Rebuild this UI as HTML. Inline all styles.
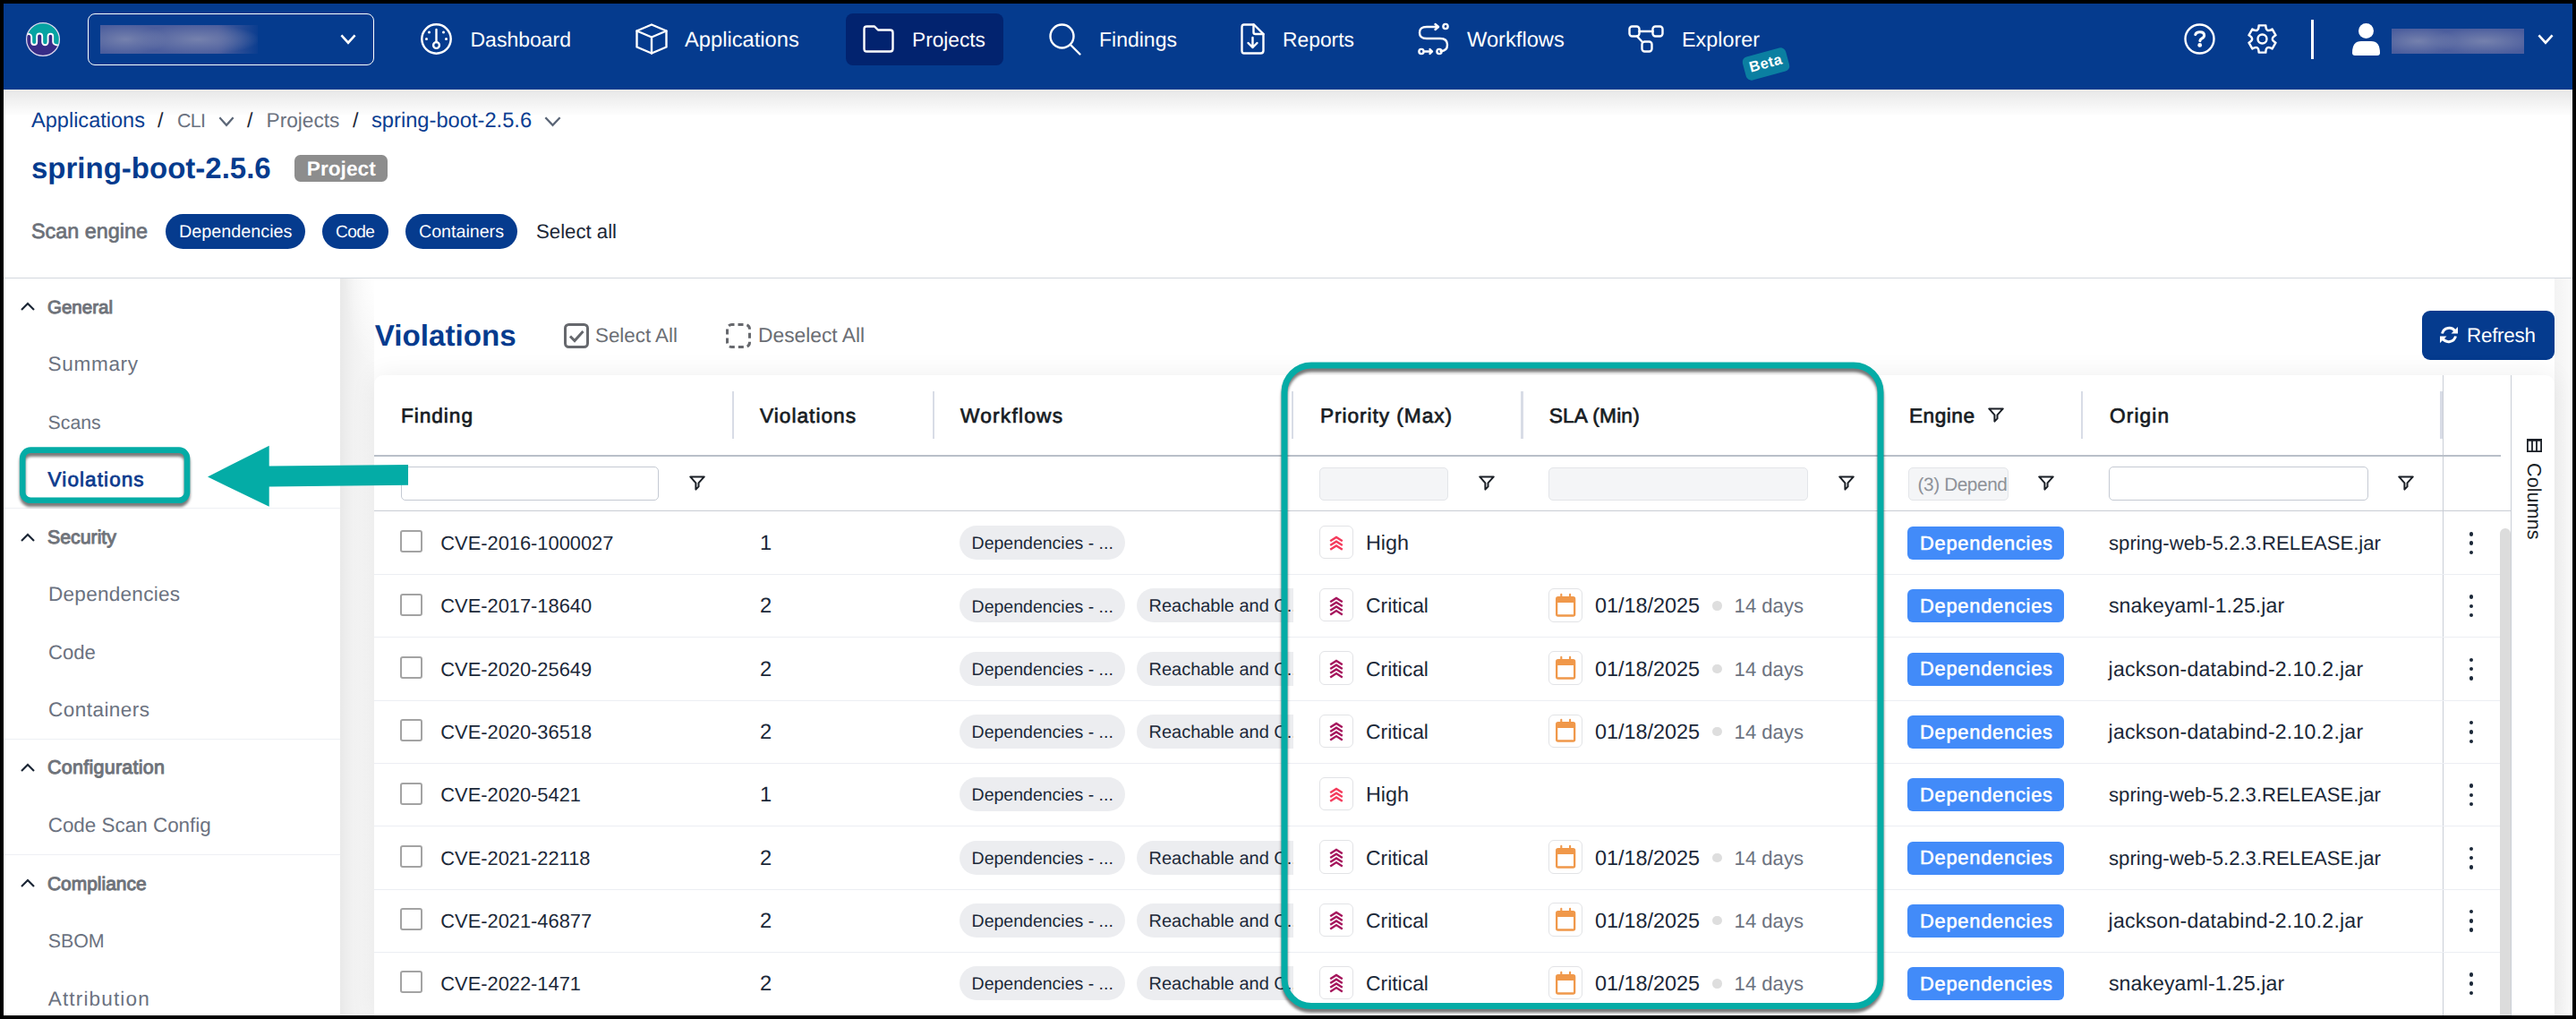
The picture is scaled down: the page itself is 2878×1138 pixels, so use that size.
<!DOCTYPE html>
<html><head><meta charset="utf-8"><style>
html,body{margin:0;padding:0;}
body{width:2878px;height:1138px;background:#000;position:relative;overflow:hidden;font-family:"Liberation Sans",sans-serif;}
#frame{position:absolute;left:0;top:0;width:2878px;height:1138px;clip-path:inset(4px 4px 4px 4px);background:#fff;}
.t{position:absolute;white-space:nowrap;text-rendering:geometricPrecision;}
svg{display:block;}
</style></head><body><div id="frame">
<div style="position:absolute;left:0px;top:0px;width:2878px;height:100px;background:#053b8e;"></div>
<div style="position:absolute;left:0px;top:100px;width:2878px;height:30px;background:linear-gradient(to bottom,rgba(0,0,0,0.095),rgba(0,0,0,0.02) 80%,rgba(0,0,0,0));"></div>
<svg style="position:absolute;left:28.5px;top:25px;overflow:visible;" width="38" height="38" viewBox="0 0 38 38"><defs><clipPath id="lc"><circle cx="19" cy="19" r="18.6"/></clipPath></defs>
<g clip-path="url(#lc)"><rect x="-2" y="-2" width="42" height="42" fill="#372c87"/>
<path d="M-1 14.5 Q5.5 11 6.2 16 V22 A3 3 0 0 0 12.2 22 V15.5 A3 3 0 0 1 18.2 15.5 V22 A3.2 3.2 0 0 0 24.6 22 V15.5 A2.8 2.8 0 0 1 30.2 15.5 V22 Q30.5 26 39 25.5 V-2 H-1Z" fill="#05a3a2"/>
<path d="M-1 14.5 Q5.5 11 6.2 16 V22 A3 3 0 0 0 12.2 22 V15.5 A3 3 0 0 1 18.2 15.5 V22 A3.2 3.2 0 0 0 24.6 22 V15.5 A2.8 2.8 0 0 1 30.2 15.5 V22 Q30.5 26 39 25.5" fill="none" stroke="#fff" stroke-width="1.9"/></g>
<circle cx="19" cy="19" r="18.4" fill="none" stroke="#dcd8ee" stroke-width="1.3"/></svg>
<div style="position:absolute;left:98px;top:15px;width:320px;height:58px;box-sizing:border-box;border:1.7px solid #fff;border-radius:8px;"></div>
<div style="position:absolute;left:112px;top:28px;width:176px;height:32px;background:radial-gradient(ellipse 48px 17px at 16% 50%,#7581ad,rgba(117,129,173,0)),radial-gradient(ellipse 70px 17px at 62% 50%,#7581ad,rgba(117,129,173,0)),linear-gradient(90deg,#4b5d9d 0%,#4b5d9d 75%,#0b3d8f 100%);"></div>
<svg style="position:absolute;left:381px;top:39px;overflow:visible;" width="16" height="10" viewBox="0 0 16 10"><path d="M1.3 1.3 L8.0 8.7 L14.7 1.3" fill="none" stroke="#ffffff" stroke-width="2.6" stroke-linecap="square" stroke-linejoin="miter"/></svg>
<svg style="position:absolute;left:470px;top:26px;overflow:visible;" width="35" height="35" viewBox="0 0 35 35"><g fill="none" stroke="#fff" stroke-width="2.4" stroke-linecap="round" stroke-linejoin="round"><circle cx="17.5" cy="17.5" r="16.2"/><line x1="17.5" y1="7" x2="17.5" y2="21"/><circle cx="17.5" cy="24.5" r="3.4"/></g>
<g fill="#fff"><circle cx="9.5" cy="10" r="1.5"/><circle cx="25.5" cy="10" r="1.5"/><circle cx="6.5" cy="17.5" r="1.5"/><circle cx="28.5" cy="17.5" r="1.5"/></g></svg>
<div class="t" style="left:525.50px;top:33.00px;font-size:23.00px;line-height:23.00px;color:#ffffff;">Dashboard</div>
<svg style="position:absolute;left:710px;top:26px;overflow:visible;" width="36" height="35" viewBox="0 0 36 35"><g fill="none" stroke="#fff" stroke-width="2.4" stroke-linecap="round" stroke-linejoin="round" stroke-width="2.2"><path d="M18 1.5 L34.5 8.5 V26.5 L18 33.5 L1.5 26.5 V8.5Z"/><path d="M1.5 8.5 L18 15.5 L34.5 8.5 M18 15.5 V33.5"/></g></svg>
<div class="t" style="left:765.00px;top:34.00px;font-size:23.70px;line-height:23.70px;color:#ffffff;">Applications</div>
<div style="position:absolute;left:945px;top:15px;width:176px;height:58px;background:#02236f;border-radius:8px;"></div>
<svg style="position:absolute;left:964px;top:28px;overflow:visible;" width="35" height="31" viewBox="0 0 35 31"><path fill="none" stroke="#fff" stroke-width="2.4" stroke-linecap="round" stroke-linejoin="round" stroke-width="2.3" d="M4.5 1.5 H13 L17 5.5 H30.5 Q33.5 5.5 33.5 8.5 V26.5 Q33.5 29.5 30.5 29.5 H4.5 Q1.5 29.5 1.5 26.5 V4.5 Q1.5 1.5 4.5 1.5Z"/></svg>
<div class="t" style="left:1019.00px;top:33.00px;font-size:22.70px;line-height:22.70px;color:#ffffff;">Projects</div>
<svg style="position:absolute;left:1172px;top:26px;overflow:visible;" width="36" height="36" viewBox="0 0 36 36"><g fill="none" stroke="#fff" stroke-width="2.4" stroke-linecap="round" stroke-linejoin="round" stroke-width="2.3"><circle cx="14.5" cy="14.5" r="13"/><line x1="24" y1="24" x2="34.5" y2="34.5"/></g></svg>
<div class="t" style="left:1228.00px;top:33.00px;font-size:23.00px;line-height:23.00px;color:#ffffff;">Findings</div>
<svg style="position:absolute;left:1386px;top:26px;overflow:visible;" width="27" height="35" viewBox="0 0 27 35"><g fill="none" stroke="#fff" stroke-width="2.4" stroke-linecap="round" stroke-linejoin="round" stroke-width="2.3"><path d="M4 1.5 H15 L25.5 12 V30.5 Q25.5 33.5 22.5 33.5 H4 Q1.5 33.5 1.5 30.5 V4.5 Q1.5 1.5 4 1.5Z"/><path d="M14.5 1.5 V10 Q14.5 12 16.5 12 H25.5"/><path d="M13.5 16 V27 M8.5 22 L13.5 27 L18.5 22"/></g></svg>
<div class="t" style="left:1433.00px;top:33.00px;font-size:22.85px;line-height:22.85px;color:#ffffff;">Reports</div>
<svg style="position:absolute;left:1584px;top:26px;overflow:visible;" width="36" height="36" viewBox="0 0 36 36"><g fill="none" stroke="#fff" stroke-width="2.4" stroke-linecap="round" stroke-linejoin="round" stroke-width="2.2"><path d="M23 4 H10 Q2 4 2 10.5 Q2 17 10 17 H25 Q33 17 33 24 Q33 31 25.5 31"/><path d="M19.5 1 L23 4 L19.5 7"/><circle cx="31" cy="3.5" r="2.6"/><circle cx="4" cy="31.5" r="2.6"/><circle cx="24" cy="31.5" r="2.6"/><path d="M8 31.5 H16 M13.5 29 L16 31.5 L13.5 34"/></g></svg>
<div class="t" style="left:1639.00px;top:34.00px;font-size:23.70px;line-height:23.70px;color:#ffffff;">Workflows</div>
<svg style="position:absolute;left:1819px;top:28px;overflow:visible;" width="40" height="31" viewBox="0 0 40 31"><g fill="none" stroke="#fff" stroke-width="2.4" stroke-linecap="round" stroke-linejoin="round" stroke-width="2.2"><rect x="1.5" y="1.5" width="11" height="11" rx="3"/><rect x="27.5" y="1.5" width="11" height="11" rx="3"/><rect x="15.5" y="18.5" width="11" height="11" rx="3"/><path d="M12.5 7 H27.5 M10 12.5 L16 19"/></g></svg>
<div class="t" style="left:1879.00px;top:33.00px;font-size:23.35px;line-height:23.35px;color:#ffffff;">Explorer</div>
<div style="position:absolute;left:1948px;top:58px;width:50px;height:27px;background:#0b7fa1;border-radius:6px;transform:rotate(-15deg);"></div>
<div class="t" style="left:1948px;top:58px;width:50px;height:27px;line-height:27px;text-align:center;font-size:16.5px;font-weight:700;color:#fff;transform:rotate(-15deg);letter-spacing:0.5px;">Beta</div>
<svg style="position:absolute;left:2440px;top:26px;overflow:visible;" width="35" height="35" viewBox="0 0 35 35"><g fill="none" stroke="#fff" stroke-width="2.4" stroke-linecap="round" stroke-linejoin="round" stroke-width="2.6"><circle cx="17.5" cy="17.5" r="16"/></g><path d="M12.8 12.6 Q13.6 9.8 17.8 9.8 Q22.6 9.8 22.6 13.4 Q22.6 15.6 19.8 17.2 Q18.2 18.1 17.9 19.6" fill="none" stroke="#fff" stroke-width="3.1" stroke-linecap="round"/><circle cx="17.7" cy="24.4" r="2.4" fill="#fff"/></svg>
<svg style="position:absolute;left:2511px;top:26px;overflow:visible;top:27px;" width="33" height="35" viewBox="0 0 33 35"><g fill="none" stroke="#fff" stroke-width="2.4" stroke-linecap="round" stroke-linejoin="round" stroke-width="2.3"><path d="M12.64 1.38 L20.36 1.38 Q20.30 9.92 27.66 5.60 L31.52 12.28 Q24.10 16.50 31.52 20.72 L27.66 27.40 Q20.30 23.08 20.36 31.62 L12.64 31.62 Q12.70 23.08 5.34 27.40 L1.48 20.72 Q8.90 16.50 1.48 12.28 L5.34 5.60 Q12.70 9.92 12.64 1.38 Z"/><circle cx="16.5" cy="16.5" r="5"/></g></svg>
<div style="position:absolute;left:2582px;top:22px;width:2.5px;height:44px;background:#fff;"></div>
<svg style="position:absolute;left:2628px;top:26px;overflow:visible;" width="32" height="36" viewBox="0 0 32 36"><g fill="#fff"><circle cx="15.5" cy="8.5" r="8.5"/><path d="M0 33 Q0 20 10 20 H21 Q31 20 31 33 Q31 36 28 36 H3 Q0 36 0 33Z"/></g></svg>
<div style="position:absolute;left:2672px;top:32px;width:148px;height:28px;background:radial-gradient(ellipse 45px 15px at 20% 50%,#7581ad,rgba(117,129,173,0)),radial-gradient(ellipse 60px 15px at 70% 50%,#7581ad,rgba(117,129,173,0)),#4b5d9d;"></div>
<svg style="position:absolute;left:2836px;top:39px;overflow:visible;" width="16" height="10" viewBox="0 0 16 10"><path d="M1.3 1.3 L8.0 8.7 L14.7 1.3" fill="none" stroke="#ffffff" stroke-width="2.6" stroke-linecap="square" stroke-linejoin="miter"/></svg>
<div class="t" style="left:35.00px;top:123.00px;font-size:23.55px;line-height:23.55px;color:#0a3d91;">Applications</div>
<div class="t" style="left:176.00px;top:123.00px;font-size:23.25px;line-height:23.25px;color:#1c2736;">/</div>
<div class="t" style="left:198.00px;top:125.00px;font-size:21.40px;line-height:21.40px;color:#6b7280;letter-spacing:-0.646px;">CLI</div>
<svg style="position:absolute;left:245px;top:131px;overflow:visible;" width="16" height="10" viewBox="0 0 16 10"><path d="M1.15 1.15 L8.0 8.85 L14.85 1.15" fill="none" stroke="#5b6677" stroke-width="2.3" stroke-linecap="square" stroke-linejoin="miter"/></svg>
<div class="t" style="left:276.00px;top:123.00px;font-size:23.25px;line-height:23.25px;color:#1c2736;">/</div>
<div class="t" style="left:297.50px;top:123.00px;font-size:22.70px;line-height:22.70px;color:#6b7280;">Projects</div>
<div class="t" style="left:394.00px;top:123.00px;font-size:23.25px;line-height:23.25px;color:#1c2736;">/</div>
<div class="t" style="left:415.00px;top:124.00px;font-size:23.70px;line-height:23.70px;color:#0a3d91;">spring-boot-2.5.6</div>
<svg style="position:absolute;left:609px;top:131px;overflow:visible;" width="17" height="10" viewBox="0 0 17 10"><path d="M1.15 1.15 L8.5 8.85 L15.85 1.15" fill="none" stroke="#5b6677" stroke-width="2.3" stroke-linecap="square" stroke-linejoin="miter"/></svg>
<div class="t" style="left:35.00px;top:171.00px;font-size:33.00px;line-height:33.00px;color:#053b8e;font-weight:700;">spring-boot-2.5.6</div>
<div style="position:absolute;left:329px;top:173px;width:104px;height:30px;background:#8d8d8d;border-radius:6.5px;"></div>
<div class="t" style="left:342.80px;top:177.00px;font-size:22.70px;line-height:22.70px;color:#fff;font-weight:700;">Project</div>
<div class="t" style="left:35.00px;top:247.00px;font-size:23.40px;line-height:23.40px;color:#6b7078;-webkit-text-stroke:0.7px #6b7078;">Scan engine</div>
<div style="position:absolute;left:185px;top:239px;width:156px;height:39px;background:#053b8e;border-radius:20px;"></div>
<div class="t" style="left:200.00px;top:250.00px;font-size:19.80px;line-height:19.80px;color:#fff;">Dependencies</div>
<div style="position:absolute;left:360px;top:239px;width:74px;height:39px;background:#053b8e;border-radius:20px;"></div>
<div class="t" style="left:375.00px;top:250.00px;font-size:19.10px;line-height:19.10px;color:#fff;letter-spacing:-0.574px;">Code</div>
<div style="position:absolute;left:453px;top:239px;width:125px;height:39px;background:#053b8e;border-radius:20px;"></div>
<div class="t" style="left:468.00px;top:250.00px;font-size:19.65px;line-height:19.65px;color:#fff;">Containers</div>
<div class="t" style="left:599.00px;top:248.00px;font-size:22.20px;line-height:22.20px;color:#1c2736;">Select all</div>
<div style="position:absolute;left:4px;top:309.5px;width:2870px;height:1.5px;background:#d3d8de;"></div>
<svg style="position:absolute;left:23px;top:338px;overflow:visible;" width="16" height="9" viewBox="0 0 16 9"><path d="M1 8 L8 1 L15 8" fill="none" stroke="#1c2736" stroke-width="2.2"/></svg>
<div class="t" style="left:53.00px;top:334.00px;font-size:20.50px;line-height:20.50px;color:#6f737a;-webkit-text-stroke:1.0px #6f737a;">General</div>
<div class="t" style="left:53.60px;top:396.00px;font-size:22.55px;line-height:22.55px;color:#6b7280;letter-spacing:0.666px;">Summary</div>
<div class="t" style="left:53.60px;top:462.00px;font-size:21.25px;line-height:21.25px;color:#6b7280;">Scans</div>
<div class="t" style="left:53.60px;top:525.00px;font-size:22.55px;line-height:22.55px;color:#0b3a8d;-webkit-text-stroke:0.75px #0b3a8d;letter-spacing:1.077px;">Violations</div>
<div style="position:absolute;left:4px;top:567px;width:376px;height:1px;background:#eef0f4;"></div>
<svg style="position:absolute;left:23px;top:595.5px;overflow:visible;" width="16" height="9" viewBox="0 0 16 9"><path d="M1 8 L8 1 L15 8" fill="none" stroke="#1c2736" stroke-width="2.2"/></svg>
<div class="t" style="left:53.00px;top:590.00px;font-size:21.30px;line-height:21.30px;color:#6f737a;-webkit-text-stroke:1.0px #6f737a;">Security</div>
<div class="t" style="left:54.00px;top:653.00px;font-size:22.55px;line-height:22.55px;color:#6b7280;letter-spacing:0.265px;">Dependencies</div>
<div class="t" style="left:54.00px;top:718.00px;font-size:22.15px;line-height:22.15px;color:#6b7280;">Code</div>
<div class="t" style="left:54.00px;top:782.00px;font-size:22.55px;line-height:22.55px;color:#6b7280;letter-spacing:0.447px;">Containers</div>
<div style="position:absolute;left:4px;top:824.5px;width:376px;height:1px;background:#eef0f4;"></div>
<svg style="position:absolute;left:23px;top:852.5px;overflow:visible;" width="16" height="9" viewBox="0 0 16 9"><path d="M1 8 L8 1 L15 8" fill="none" stroke="#1c2736" stroke-width="2.2"/></svg>
<div class="t" style="left:53.00px;top:847.00px;font-size:21.50px;line-height:21.50px;color:#6f737a;-webkit-text-stroke:1.0px #6f737a;letter-spacing:0.261px;">Configuration</div>
<div class="t" style="left:53.70px;top:911.00px;font-size:22.45px;line-height:22.45px;color:#6b7280;">Code Scan Config</div>
<div style="position:absolute;left:4px;top:954px;width:376px;height:1px;background:#eef0f4;"></div>
<svg style="position:absolute;left:23px;top:982px;overflow:visible;" width="16" height="9" viewBox="0 0 16 9"><path d="M1 8 L8 1 L15 8" fill="none" stroke="#1c2736" stroke-width="2.2"/></svg>
<div class="t" style="left:53.00px;top:978.00px;font-size:20.95px;line-height:20.95px;color:#6f737a;-webkit-text-stroke:1.0px #6f737a;">Compliance</div>
<div class="t" style="left:53.70px;top:1041.00px;font-size:21.40px;line-height:21.40px;color:#6b7280;">SBOM</div>
<div class="t" style="left:53.70px;top:1105.00px;font-size:22.55px;line-height:22.55px;color:#6b7280;letter-spacing:1.155px;">Attribution</div>
<div style="position:absolute;left:380px;top:311px;width:38px;height:823px;background:linear-gradient(90deg,#e9e9e9,#f2f2f2 40%,#f7f7f7 100%);"></div>
<div style="position:absolute;left:380px;top:311px;width:40px;height:110px;background:radial-gradient(ellipse 34px 100px at 100% 0%,rgba(255,255,255,1),rgba(255,255,255,0));"></div>
<div class="t" style="left:418.80px;top:359.00px;font-size:33.20px;line-height:33.20px;color:#053b8e;font-weight:700;">Violations</div>
<svg style="position:absolute;left:630px;top:361px;overflow:visible;" width="28" height="28" viewBox="0 0 28 28"><rect x="1.5" y="1.5" width="25" height="25" rx="4" fill="none" stroke="#66686d" stroke-width="3"/><path d="M7 14.5 L12 19.5 L21.5 9" fill="none" stroke="#66686d" stroke-width="3"/></svg>
<div class="t" style="left:665.00px;top:364.00px;font-size:22.35px;line-height:22.35px;color:#6b6e74;">Select All</div>
<svg style="position:absolute;left:811px;top:361px;overflow:visible;" width="28" height="28" viewBox="0 0 28 28"><rect x="1.5" y="1.5" width="25" height="25" rx="5" fill="none" stroke="#66686d" stroke-width="3" stroke-dasharray="6 4" stroke-dashoffset="3"/></svg>
<div class="t" style="left:847.00px;top:363.00px;font-size:22.80px;line-height:22.80px;color:#6b6e74;">Deselect All</div>
<div style="position:absolute;left:2706px;top:347px;width:148px;height:55px;background:#053b8e;border-radius:9px;"></div>
<svg style="position:absolute;left:2725px;top:364px;overflow:visible;" width="22" height="20" viewBox="0 0 22 20"><g fill="none" stroke="#fff" stroke-width="3"><path d="M3.5 8.5 A8 8 0 0 1 18 6"/><path d="M18.5 11.5 A8 8 0 0 1 4 14"/></g><path d="M21 1 V8.5 H13.5Z M1 19 V11.5 H8.5Z" fill="#fff"/></svg>
<div class="t" style="left:2756.00px;top:364.00px;font-size:22.45px;line-height:22.45px;color:#fff;letter-spacing:-0.275px;">Refresh</div>
<div style="position:absolute;left:2854px;top:311px;width:20px;height:823px;background:linear-gradient(90deg,#f3f3f3,#f7f7f7 60%,#fbfbfb);"></div>
<div style="position:absolute;left:418px;top:419px;width:2436px;height:720px;background:#fff;border-radius:10px 10px 0 0;box-shadow:0 0 28px rgba(0,0,0,0.07);"></div>
<div class="t" style="left:448.00px;top:453.00px;font-size:22.70px;line-height:22.70px;color:#171c23;-webkit-text-stroke:0.7px #171c23;letter-spacing:0.933px;">Finding</div>
<div class="t" style="left:849.00px;top:453.00px;font-size:22.70px;line-height:22.70px;color:#171c23;-webkit-text-stroke:0.7px #171c23;letter-spacing:1.006px;">Violations</div>
<div class="t" style="left:1073.00px;top:453.00px;font-size:22.70px;line-height:22.70px;color:#171c23;-webkit-text-stroke:0.7px #171c23;letter-spacing:1.227px;">Workflows</div>
<div class="t" style="left:1475.00px;top:453.00px;font-size:22.70px;line-height:22.70px;color:#171c23;-webkit-text-stroke:0.7px #171c23;letter-spacing:0.936px;">Priority (Max)</div>
<div class="t" style="left:1730.70px;top:453.00px;font-size:22.70px;line-height:22.70px;color:#171c23;-webkit-text-stroke:0.7px #171c23;letter-spacing:0.178px;">SLA (Min)</div>
<div class="t" style="left:2133.00px;top:453.00px;font-size:22.70px;line-height:22.70px;color:#171c23;-webkit-text-stroke:0.7px #171c23;letter-spacing:0.473px;">Engine</div>
<div class="t" style="left:2357.00px;top:453.00px;font-size:22.70px;line-height:22.70px;color:#171c23;-webkit-text-stroke:0.7px #171c23;letter-spacing:1.096px;">Origin</div>
<div style="position:absolute;left:817.5px;top:437px;width:2.5px;height:53px;background:#d8dce6;"></div>
<div style="position:absolute;left:1041.5px;top:437px;width:2.5px;height:53px;background:#d8dce6;"></div>
<div style="position:absolute;left:1442.5px;top:437px;width:2.5px;height:53px;background:#d8dce6;"></div>
<div style="position:absolute;left:1699px;top:437px;width:2.5px;height:53px;background:#d8dce6;"></div>
<div style="position:absolute;left:2324.5px;top:437px;width:2.5px;height:53px;background:#d8dce6;"></div>
<div style="position:absolute;left:2726px;top:437px;width:2.5px;height:53px;background:#d8dce6;"></div>
<svg style="position:absolute;left:2221px;top:455px;overflow:visible;" width="18" height="17" viewBox="0 0 18 17"><path d="M1.2 1.4 H16.8 L10.5 8.3 V12.4 L7.4 15.6 V8.3Z" fill="none" stroke="#1a1f26" stroke-width="2.0" stroke-linejoin="round"/></svg>
<div style="position:absolute;left:2729px;top:419px;width:1.2px;height:715px;background:#c9ced6;"></div>
<div style="position:absolute;left:2805px;top:419px;width:1.2px;height:715px;background:#c9ced6;"></div>
<div style="position:absolute;left:418px;top:508px;width:2376px;height:2px;background:#b9bfc9;"></div>
<div style="position:absolute;left:447.5px;top:521px;width:288.5px;height:38px;box-sizing:border-box;background:#fff;border:1.3px solid #c5cad3;border-radius:5px;"></div>
<svg style="position:absolute;left:770px;top:530.5px;overflow:visible;" width="18" height="17" viewBox="0 0 18 17"><path d="M1.2 1.4 H16.8 L10.5 8.3 V12.4 L7.4 15.6 V8.3Z" fill="none" stroke="#1a1f26" stroke-width="2.0" stroke-linejoin="round"/></svg>
<div style="position:absolute;left:1474px;top:521.5px;width:144px;height:37px;box-sizing:border-box;background:#f4f5f7;border:1.3px solid #e3e5e9;border-radius:5px;"></div>
<svg style="position:absolute;left:1652px;top:531px;overflow:visible;" width="18" height="17" viewBox="0 0 18 17"><path d="M1.2 1.4 H16.8 L10.5 8.3 V12.4 L7.4 15.6 V8.3Z" fill="none" stroke="#1a1f26" stroke-width="2.0" stroke-linejoin="round"/></svg>
<div style="position:absolute;left:1730px;top:521.5px;width:289.5px;height:37px;box-sizing:border-box;background:#f4f5f7;border:1.3px solid #e3e5e9;border-radius:5px;"></div>
<svg style="position:absolute;left:2053.5px;top:531px;overflow:visible;" width="18" height="17" viewBox="0 0 18 17"><path d="M1.2 1.4 H16.8 L10.5 8.3 V12.4 L7.4 15.6 V8.3Z" fill="none" stroke="#1a1f26" stroke-width="2.0" stroke-linejoin="round"/></svg>
<div style="position:absolute;left:2132px;top:521.5px;width:112px;height:37px;box-sizing:border-box;background:#f4f5f7;border:1.3px solid #e3e5e9;border-radius:5px;"></div>
<div style="position:absolute;left:2132px;top:521.5px;width:111px;height:37px;overflow:hidden;">
<div class="t" style="left:10.60px;top:10.00px;font-size:20.75px;line-height:20.75px;color:#8e9299;letter-spacing:-0.396px;">(3) Dependencies</div>
</div>
<svg style="position:absolute;left:2277px;top:531px;overflow:visible;" width="18" height="17" viewBox="0 0 18 17"><path d="M1.2 1.4 H16.8 L10.5 8.3 V12.4 L7.4 15.6 V8.3Z" fill="none" stroke="#1a1f26" stroke-width="2.0" stroke-linejoin="round"/></svg>
<div style="position:absolute;left:2356px;top:521px;width:290px;height:38px;box-sizing:border-box;background:#fff;border:1.3px solid #c5cad3;border-radius:5px;"></div>
<svg style="position:absolute;left:2678.5px;top:531px;overflow:visible;" width="18" height="17" viewBox="0 0 18 17"><path d="M1.2 1.4 H16.8 L10.5 8.3 V12.4 L7.4 15.6 V8.3Z" fill="none" stroke="#1a1f26" stroke-width="2.0" stroke-linejoin="round"/></svg>
<div style="position:absolute;left:418px;top:570px;width:2387px;height:1.2px;background:#c9cdd4;"></div>
<div style="position:absolute;left:447px;top:592.3px;width:25px;height:25px;box-sizing:border-box;border:2.6px solid #a3a3a3;border-radius:3px;"></div>
<div class="t" style="left:492.30px;top:596.00px;font-size:21.85px;line-height:21.85px;color:#1b2838;">CVE-2016-1000027</div>
<div class="t" style="left:849.00px;top:595.00px;font-size:23.75px;line-height:23.75px;color:#1b2838;">1</div>
<div style="position:absolute;left:1072px;top:587.0px;width:185px;height:38px;background:#ecedf0;border-radius:19px;"></div>
<div class="t" style="left:1085.60px;top:598.00px;font-size:19.50px;line-height:19.50px;color:#1b2838;">Dependencies - ...</div>
<div style="position:absolute;left:1474.4px;top:586.8px;width:37.3px;height:37.3px;box-sizing:border-box;border:1.4px solid #e2e3e6;border-radius:6px;background:#fff;"></div>
<svg style="position:absolute;left:1485px;top:598.5px;overflow:visible;top:596.5px;" width="16" height="20.1" viewBox="0 0 16 20.1"><path d="M1.2 7.3 L8 3.0 L14.8 7.3 M1.2 12.0 L8 7.7 L14.8 12.0 M1.2 16.7 L8 12.4 L14.8 16.7 " fill="none" stroke="#f43b5c" stroke-width="2.4" stroke-linejoin="miter"/></svg>
<div class="t" style="left:1526.00px;top:595.00px;font-size:23.35px;line-height:23.35px;color:#1b2838;">High</div>
<div style="position:absolute;left:2131px;top:588.0px;width:175px;height:37px;background:#428bf9;border-radius:6px;"></div>
<div class="t" style="left:2145.00px;top:596.00px;font-size:21.80px;line-height:21.80px;color:#fff;-webkit-text-stroke:0.55px #fff;letter-spacing:0.787px;">Dependencies</div>
<div class="t" style="left:2356.00px;top:596.00px;font-size:22.15px;line-height:22.15px;color:#1b2838;">spring-web-5.2.3.RELEASE.jar</div>
<div style="position:absolute;left:2758.7px;top:594.00px;width:4.6px;height:4.6px;border-radius:50%;background:#1b2838;"></div>
<div style="position:absolute;left:2758.7px;top:604.30px;width:4.6px;height:4.6px;border-radius:50%;background:#1b2838;"></div>
<div style="position:absolute;left:2758.7px;top:614.60px;width:4.6px;height:4.6px;border-radius:50%;background:#1b2838;"></div>
<div style="position:absolute;left:418px;top:641.0px;width:2376px;height:1.2px;background:#eceef3;"></div>
<div style="position:absolute;left:447px;top:662.5999999999999px;width:25px;height:25px;box-sizing:border-box;border:2.6px solid #a3a3a3;border-radius:3px;"></div>
<div class="t" style="left:492.30px;top:666.00px;font-size:21.85px;line-height:21.85px;color:#1b2838;">CVE-2017-18640</div>
<div class="t" style="left:849.00px;top:665.00px;font-size:23.75px;line-height:23.75px;color:#1b2838;">2</div>
<div style="position:absolute;left:1072px;top:657.3px;width:185px;height:38px;background:#ecedf0;border-radius:19px;"></div>
<div class="t" style="left:1085.60px;top:669.00px;font-size:19.50px;line-height:19.50px;color:#1b2838;">Dependencies - ...</div>
<div style="position:absolute;left:1270px;top:657.3px;width:175px;height:38px;overflow:hidden;"><div style="position:absolute;left:0;top:0;width:240px;height:38px;background:#ecedf0;border-radius:19px;"></div>
<div class="t" style="left:13.60px;top:11.00px;font-size:19.95px;line-height:19.95px;color:#1b2838;">Reachable and C...</div>
</div>
<div style="position:absolute;left:1474.4px;top:657.0999999999999px;width:37.3px;height:37.3px;box-sizing:border-box;border:1.4px solid #e2e3e6;border-radius:6px;background:#fff;"></div>
<svg style="position:absolute;left:1485px;top:666.5999999999999px;overflow:visible;top:664.5999999999999px;" width="16" height="24.8" viewBox="0 0 16 24.8"><path d="M1.2 7.3 L8 3.0 L14.8 7.3 M1.2 12.0 L8 7.7 L14.8 12.0 M1.2 16.7 L8 12.4 L14.8 16.7 M1.2 21.400000000000002 L8 17.1 L14.8 21.400000000000002 " fill="none" stroke="#a5155c" stroke-width="2.4" stroke-linejoin="miter"/></svg>
<div class="t" style="left:1526.00px;top:665.00px;font-size:22.90px;line-height:22.90px;color:#1b2838;">Critical</div>
<div style="position:absolute;left:1730.3px;top:656.9px;width:37.7px;height:37.7px;box-sizing:border-box;border:1.4px solid #e2e3e6;border-radius:6px;background:#fff;"></div>
<svg style="position:absolute;left:1738px;top:662.6999999999999px;overflow:visible;" width="23" height="26" viewBox="0 0 23 26"><path fill-rule="evenodd" fill="#f0984a" d="M2.8 3.1 H19.5 Q22.3 3.1 22.3 5.9 V23 Q22.3 25.8 19.5 25.8 H2.8 Q0 25.8 0 23 V5.9 Q0 3.1 2.8 3.1Z M2.3 9.9 V23.3 H20 V9.9Z"/><path d="M6.3 0.8 V4.5 M16.1 0.8 V4.5" stroke="#f0984a" stroke-width="2.1" stroke-linecap="round"/></svg>
<div class="t" style="left:1782.00px;top:665.00px;font-size:23.40px;line-height:23.40px;color:#1b2838;">01/18/2025</div>
<div style="position:absolute;left:1913px;top:671.3px;width:10.5px;height:10.5px;border-radius:50%;background:#dedede;"></div>
<div class="t" style="left:1937.60px;top:666.00px;font-size:22.10px;line-height:22.10px;color:#6b7280;">14 days</div>
<div style="position:absolute;left:2131px;top:658.3px;width:175px;height:37px;background:#428bf9;border-radius:6px;"></div>
<div class="t" style="left:2145.00px;top:666.00px;font-size:21.80px;line-height:21.80px;color:#fff;-webkit-text-stroke:0.55px #fff;letter-spacing:0.787px;">Dependencies</div>
<div class="t" style="left:2356.00px;top:665.00px;font-size:23.15px;line-height:23.15px;color:#1b2838;letter-spacing:0.036px;">snakeyaml-1.25.jar</div>
<div style="position:absolute;left:2758.7px;top:664.30px;width:4.6px;height:4.6px;border-radius:50%;background:#1b2838;"></div>
<div style="position:absolute;left:2758.7px;top:674.60px;width:4.6px;height:4.6px;border-radius:50%;background:#1b2838;"></div>
<div style="position:absolute;left:2758.7px;top:684.90px;width:4.6px;height:4.6px;border-radius:50%;background:#1b2838;"></div>
<div style="position:absolute;left:418px;top:711.0px;width:2376px;height:1.2px;background:#eceef3;"></div>
<div style="position:absolute;left:447px;top:732.9px;width:25px;height:25px;box-sizing:border-box;border:2.6px solid #a3a3a3;border-radius:3px;"></div>
<div class="t" style="left:492.30px;top:737.00px;font-size:21.85px;line-height:21.85px;color:#1b2838;">CVE-2020-25649</div>
<div class="t" style="left:849.00px;top:736.00px;font-size:23.75px;line-height:23.75px;color:#1b2838;">2</div>
<div style="position:absolute;left:1072px;top:727.6px;width:185px;height:38px;background:#ecedf0;border-radius:19px;"></div>
<div class="t" style="left:1085.60px;top:739.00px;font-size:19.50px;line-height:19.50px;color:#1b2838;">Dependencies - ...</div>
<div style="position:absolute;left:1270px;top:727.6px;width:175px;height:38px;overflow:hidden;"><div style="position:absolute;left:0;top:0;width:240px;height:38px;background:#ecedf0;border-radius:19px;"></div>
<div class="t" style="left:13.60px;top:11.00px;font-size:19.95px;line-height:19.95px;color:#1b2838;">Reachable and C...</div>
</div>
<div style="position:absolute;left:1474.4px;top:727.4px;width:37.3px;height:37.3px;box-sizing:border-box;border:1.4px solid #e2e3e6;border-radius:6px;background:#fff;"></div>
<svg style="position:absolute;left:1485px;top:736.9px;overflow:visible;top:734.9px;" width="16" height="24.8" viewBox="0 0 16 24.8"><path d="M1.2 7.3 L8 3.0 L14.8 7.3 M1.2 12.0 L8 7.7 L14.8 12.0 M1.2 16.7 L8 12.4 L14.8 16.7 M1.2 21.400000000000002 L8 17.1 L14.8 21.400000000000002 " fill="none" stroke="#a5155c" stroke-width="2.4" stroke-linejoin="miter"/></svg>
<div class="t" style="left:1526.00px;top:736.00px;font-size:22.90px;line-height:22.90px;color:#1b2838;">Critical</div>
<div style="position:absolute;left:1730.3px;top:727.2px;width:37.7px;height:37.7px;box-sizing:border-box;border:1.4px solid #e2e3e6;border-radius:6px;background:#fff;"></div>
<svg style="position:absolute;left:1738px;top:733.0px;overflow:visible;" width="23" height="26" viewBox="0 0 23 26"><path fill-rule="evenodd" fill="#f0984a" d="M2.8 3.1 H19.5 Q22.3 3.1 22.3 5.9 V23 Q22.3 25.8 19.5 25.8 H2.8 Q0 25.8 0 23 V5.9 Q0 3.1 2.8 3.1Z M2.3 9.9 V23.3 H20 V9.9Z"/><path d="M6.3 0.8 V4.5 M16.1 0.8 V4.5" stroke="#f0984a" stroke-width="2.1" stroke-linecap="round"/></svg>
<div class="t" style="left:1782.00px;top:736.00px;font-size:23.40px;line-height:23.40px;color:#1b2838;">01/18/2025</div>
<div style="position:absolute;left:1913px;top:741.6px;width:10.5px;height:10.5px;border-radius:50%;background:#dedede;"></div>
<div class="t" style="left:1937.60px;top:737.00px;font-size:22.10px;line-height:22.10px;color:#6b7280;">14 days</div>
<div style="position:absolute;left:2131px;top:728.6px;width:175px;height:37px;background:#428bf9;border-radius:6px;"></div>
<div class="t" style="left:2145.00px;top:736.00px;font-size:21.80px;line-height:21.80px;color:#fff;-webkit-text-stroke:0.55px #fff;letter-spacing:0.787px;">Dependencies</div>
<div class="t" style="left:2355.58px;top:736.00px;font-size:23.15px;line-height:23.15px;color:#1b2838;letter-spacing:0.209px;">jackson-databind-2.10.2.jar</div>
<div style="position:absolute;left:2758.7px;top:734.60px;width:4.6px;height:4.6px;border-radius:50%;background:#1b2838;"></div>
<div style="position:absolute;left:2758.7px;top:744.90px;width:4.6px;height:4.6px;border-radius:50%;background:#1b2838;"></div>
<div style="position:absolute;left:2758.7px;top:755.20px;width:4.6px;height:4.6px;border-radius:50%;background:#1b2838;"></div>
<div style="position:absolute;left:418px;top:781.5px;width:2376px;height:1.2px;background:#eceef3;"></div>
<div style="position:absolute;left:447px;top:803.1999999999999px;width:25px;height:25px;box-sizing:border-box;border:2.6px solid #a3a3a3;border-radius:3px;"></div>
<div class="t" style="left:492.30px;top:807.00px;font-size:21.85px;line-height:21.85px;color:#1b2838;">CVE-2020-36518</div>
<div class="t" style="left:849.00px;top:806.00px;font-size:23.75px;line-height:23.75px;color:#1b2838;">2</div>
<div style="position:absolute;left:1072px;top:797.9px;width:185px;height:38px;background:#ecedf0;border-radius:19px;"></div>
<div class="t" style="left:1085.60px;top:809.00px;font-size:19.50px;line-height:19.50px;color:#1b2838;">Dependencies - ...</div>
<div style="position:absolute;left:1270px;top:797.9px;width:175px;height:38px;overflow:hidden;"><div style="position:absolute;left:0;top:0;width:240px;height:38px;background:#ecedf0;border-radius:19px;"></div>
<div class="t" style="left:13.60px;top:11.00px;font-size:19.95px;line-height:19.95px;color:#1b2838;">Reachable and C...</div>
</div>
<div style="position:absolute;left:1474.4px;top:797.6999999999999px;width:37.3px;height:37.3px;box-sizing:border-box;border:1.4px solid #e2e3e6;border-radius:6px;background:#fff;"></div>
<svg style="position:absolute;left:1485px;top:807.1999999999999px;overflow:visible;top:805.1999999999999px;" width="16" height="24.8" viewBox="0 0 16 24.8"><path d="M1.2 7.3 L8 3.0 L14.8 7.3 M1.2 12.0 L8 7.7 L14.8 12.0 M1.2 16.7 L8 12.4 L14.8 16.7 M1.2 21.400000000000002 L8 17.1 L14.8 21.400000000000002 " fill="none" stroke="#a5155c" stroke-width="2.4" stroke-linejoin="miter"/></svg>
<div class="t" style="left:1526.00px;top:806.00px;font-size:22.90px;line-height:22.90px;color:#1b2838;">Critical</div>
<div style="position:absolute;left:1730.3px;top:797.5px;width:37.7px;height:37.7px;box-sizing:border-box;border:1.4px solid #e2e3e6;border-radius:6px;background:#fff;"></div>
<svg style="position:absolute;left:1738px;top:803.3px;overflow:visible;" width="23" height="26" viewBox="0 0 23 26"><path fill-rule="evenodd" fill="#f0984a" d="M2.8 3.1 H19.5 Q22.3 3.1 22.3 5.9 V23 Q22.3 25.8 19.5 25.8 H2.8 Q0 25.8 0 23 V5.9 Q0 3.1 2.8 3.1Z M2.3 9.9 V23.3 H20 V9.9Z"/><path d="M6.3 0.8 V4.5 M16.1 0.8 V4.5" stroke="#f0984a" stroke-width="2.1" stroke-linecap="round"/></svg>
<div class="t" style="left:1782.00px;top:806.00px;font-size:23.40px;line-height:23.40px;color:#1b2838;">01/18/2025</div>
<div style="position:absolute;left:1913px;top:811.9px;width:10.5px;height:10.5px;border-radius:50%;background:#dedede;"></div>
<div class="t" style="left:1937.60px;top:807.00px;font-size:22.10px;line-height:22.10px;color:#6b7280;">14 days</div>
<div style="position:absolute;left:2131px;top:798.9px;width:175px;height:37px;background:#428bf9;border-radius:6px;"></div>
<div class="t" style="left:2145.00px;top:807.00px;font-size:21.80px;line-height:21.80px;color:#fff;-webkit-text-stroke:0.55px #fff;letter-spacing:0.787px;">Dependencies</div>
<div class="t" style="left:2355.58px;top:806.00px;font-size:23.15px;line-height:23.15px;color:#1b2838;letter-spacing:0.209px;">jackson-databind-2.10.2.jar</div>
<div style="position:absolute;left:2758.7px;top:804.90px;width:4.6px;height:4.6px;border-radius:50%;background:#1b2838;"></div>
<div style="position:absolute;left:2758.7px;top:815.20px;width:4.6px;height:4.6px;border-radius:50%;background:#1b2838;"></div>
<div style="position:absolute;left:2758.7px;top:825.50px;width:4.6px;height:4.6px;border-radius:50%;background:#1b2838;"></div>
<div style="position:absolute;left:418px;top:851.5px;width:2376px;height:1.2px;background:#eceef3;"></div>
<div style="position:absolute;left:447px;top:873.5px;width:25px;height:25px;box-sizing:border-box;border:2.6px solid #a3a3a3;border-radius:3px;"></div>
<div class="t" style="left:492.30px;top:877.00px;font-size:21.85px;line-height:21.85px;color:#1b2838;">CVE-2020-5421</div>
<div class="t" style="left:849.00px;top:876.00px;font-size:23.75px;line-height:23.75px;color:#1b2838;">1</div>
<div style="position:absolute;left:1072px;top:868.2px;width:185px;height:38px;background:#ecedf0;border-radius:19px;"></div>
<div class="t" style="left:1085.60px;top:879.00px;font-size:19.50px;line-height:19.50px;color:#1b2838;">Dependencies - ...</div>
<div style="position:absolute;left:1474.4px;top:868.0px;width:37.3px;height:37.3px;box-sizing:border-box;border:1.4px solid #e2e3e6;border-radius:6px;background:#fff;"></div>
<svg style="position:absolute;left:1485px;top:879.7px;overflow:visible;top:877.7px;" width="16" height="20.1" viewBox="0 0 16 20.1"><path d="M1.2 7.3 L8 3.0 L14.8 7.3 M1.2 12.0 L8 7.7 L14.8 12.0 M1.2 16.7 L8 12.4 L14.8 16.7 " fill="none" stroke="#f43b5c" stroke-width="2.4" stroke-linejoin="miter"/></svg>
<div class="t" style="left:1526.00px;top:876.00px;font-size:23.35px;line-height:23.35px;color:#1b2838;">High</div>
<div style="position:absolute;left:2131px;top:869.2px;width:175px;height:37px;background:#428bf9;border-radius:6px;"></div>
<div class="t" style="left:2145.00px;top:877.00px;font-size:21.80px;line-height:21.80px;color:#fff;-webkit-text-stroke:0.55px #fff;letter-spacing:0.787px;">Dependencies</div>
<div class="t" style="left:2356.00px;top:877.00px;font-size:22.15px;line-height:22.15px;color:#1b2838;">spring-web-5.2.3.RELEASE.jar</div>
<div style="position:absolute;left:2758.7px;top:875.20px;width:4.6px;height:4.6px;border-radius:50%;background:#1b2838;"></div>
<div style="position:absolute;left:2758.7px;top:885.50px;width:4.6px;height:4.6px;border-radius:50%;background:#1b2838;"></div>
<div style="position:absolute;left:2758.7px;top:895.80px;width:4.6px;height:4.6px;border-radius:50%;background:#1b2838;"></div>
<div style="position:absolute;left:418px;top:922.0px;width:2376px;height:1.2px;background:#eceef3;"></div>
<div style="position:absolute;left:447px;top:943.8px;width:25px;height:25px;box-sizing:border-box;border:2.6px solid #a3a3a3;border-radius:3px;"></div>
<div class="t" style="left:492.30px;top:948.00px;font-size:21.85px;line-height:21.85px;color:#1b2838;">CVE-2021-22118</div>
<div class="t" style="left:849.00px;top:947.00px;font-size:23.75px;line-height:23.75px;color:#1b2838;">2</div>
<div style="position:absolute;left:1072px;top:938.5px;width:185px;height:38px;background:#ecedf0;border-radius:19px;"></div>
<div class="t" style="left:1085.60px;top:950.00px;font-size:19.50px;line-height:19.50px;color:#1b2838;">Dependencies - ...</div>
<div style="position:absolute;left:1270px;top:938.5px;width:175px;height:38px;overflow:hidden;"><div style="position:absolute;left:0;top:0;width:240px;height:38px;background:#ecedf0;border-radius:19px;"></div>
<div class="t" style="left:13.60px;top:11.00px;font-size:19.95px;line-height:19.95px;color:#1b2838;">Reachable and C...</div>
</div>
<div style="position:absolute;left:1474.4px;top:938.3px;width:37.3px;height:37.3px;box-sizing:border-box;border:1.4px solid #e2e3e6;border-radius:6px;background:#fff;"></div>
<svg style="position:absolute;left:1485px;top:947.8px;overflow:visible;top:945.8px;" width="16" height="24.8" viewBox="0 0 16 24.8"><path d="M1.2 7.3 L8 3.0 L14.8 7.3 M1.2 12.0 L8 7.7 L14.8 12.0 M1.2 16.7 L8 12.4 L14.8 16.7 M1.2 21.400000000000002 L8 17.1 L14.8 21.400000000000002 " fill="none" stroke="#a5155c" stroke-width="2.4" stroke-linejoin="miter"/></svg>
<div class="t" style="left:1526.00px;top:947.00px;font-size:22.90px;line-height:22.90px;color:#1b2838;">Critical</div>
<div style="position:absolute;left:1730.3px;top:938.1px;width:37.7px;height:37.7px;box-sizing:border-box;border:1.4px solid #e2e3e6;border-radius:6px;background:#fff;"></div>
<svg style="position:absolute;left:1738px;top:943.9px;overflow:visible;" width="23" height="26" viewBox="0 0 23 26"><path fill-rule="evenodd" fill="#f0984a" d="M2.8 3.1 H19.5 Q22.3 3.1 22.3 5.9 V23 Q22.3 25.8 19.5 25.8 H2.8 Q0 25.8 0 23 V5.9 Q0 3.1 2.8 3.1Z M2.3 9.9 V23.3 H20 V9.9Z"/><path d="M6.3 0.8 V4.5 M16.1 0.8 V4.5" stroke="#f0984a" stroke-width="2.1" stroke-linecap="round"/></svg>
<div class="t" style="left:1782.00px;top:947.00px;font-size:23.40px;line-height:23.40px;color:#1b2838;">01/18/2025</div>
<div style="position:absolute;left:1913px;top:952.5px;width:10.5px;height:10.5px;border-radius:50%;background:#dedede;"></div>
<div class="t" style="left:1937.60px;top:948.00px;font-size:22.10px;line-height:22.10px;color:#6b7280;">14 days</div>
<div style="position:absolute;left:2131px;top:939.5px;width:175px;height:37px;background:#428bf9;border-radius:6px;"></div>
<div class="t" style="left:2145.00px;top:947.00px;font-size:21.80px;line-height:21.80px;color:#fff;-webkit-text-stroke:0.55px #fff;letter-spacing:0.787px;">Dependencies</div>
<div class="t" style="left:2356.00px;top:948.00px;font-size:22.15px;line-height:22.15px;color:#1b2838;">spring-web-5.2.3.RELEASE.jar</div>
<div style="position:absolute;left:2758.7px;top:945.50px;width:4.6px;height:4.6px;border-radius:50%;background:#1b2838;"></div>
<div style="position:absolute;left:2758.7px;top:955.80px;width:4.6px;height:4.6px;border-radius:50%;background:#1b2838;"></div>
<div style="position:absolute;left:2758.7px;top:966.10px;width:4.6px;height:4.6px;border-radius:50%;background:#1b2838;"></div>
<div style="position:absolute;left:418px;top:992.5px;width:2376px;height:1.2px;background:#eceef3;"></div>
<div style="position:absolute;left:447px;top:1014.0999999999999px;width:25px;height:25px;box-sizing:border-box;border:2.6px solid #a3a3a3;border-radius:3px;"></div>
<div class="t" style="left:492.30px;top:1018.00px;font-size:21.85px;line-height:21.85px;color:#1b2838;">CVE-2021-46877</div>
<div class="t" style="left:849.00px;top:1017.00px;font-size:23.75px;line-height:23.75px;color:#1b2838;">2</div>
<div style="position:absolute;left:1072px;top:1008.8px;width:185px;height:38px;background:#ecedf0;border-radius:19px;"></div>
<div class="t" style="left:1085.60px;top:1020.00px;font-size:19.50px;line-height:19.50px;color:#1b2838;">Dependencies - ...</div>
<div style="position:absolute;left:1270px;top:1008.8px;width:175px;height:38px;overflow:hidden;"><div style="position:absolute;left:0;top:0;width:240px;height:38px;background:#ecedf0;border-radius:19px;"></div>
<div class="t" style="left:13.60px;top:11.00px;font-size:19.95px;line-height:19.95px;color:#1b2838;">Reachable and C...</div>
</div>
<div style="position:absolute;left:1474.4px;top:1008.5999999999999px;width:37.3px;height:37.3px;box-sizing:border-box;border:1.4px solid #e2e3e6;border-radius:6px;background:#fff;"></div>
<svg style="position:absolute;left:1485px;top:1018.0999999999999px;overflow:visible;top:1016.0999999999999px;" width="16" height="24.8" viewBox="0 0 16 24.8"><path d="M1.2 7.3 L8 3.0 L14.8 7.3 M1.2 12.0 L8 7.7 L14.8 12.0 M1.2 16.7 L8 12.4 L14.8 16.7 M1.2 21.400000000000002 L8 17.1 L14.8 21.400000000000002 " fill="none" stroke="#a5155c" stroke-width="2.4" stroke-linejoin="miter"/></svg>
<div class="t" style="left:1526.00px;top:1017.00px;font-size:22.90px;line-height:22.90px;color:#1b2838;">Critical</div>
<div style="position:absolute;left:1730.3px;top:1008.4px;width:37.7px;height:37.7px;box-sizing:border-box;border:1.4px solid #e2e3e6;border-radius:6px;background:#fff;"></div>
<svg style="position:absolute;left:1738px;top:1014.1999999999999px;overflow:visible;" width="23" height="26" viewBox="0 0 23 26"><path fill-rule="evenodd" fill="#f0984a" d="M2.8 3.1 H19.5 Q22.3 3.1 22.3 5.9 V23 Q22.3 25.8 19.5 25.8 H2.8 Q0 25.8 0 23 V5.9 Q0 3.1 2.8 3.1Z M2.3 9.9 V23.3 H20 V9.9Z"/><path d="M6.3 0.8 V4.5 M16.1 0.8 V4.5" stroke="#f0984a" stroke-width="2.1" stroke-linecap="round"/></svg>
<div class="t" style="left:1782.00px;top:1017.00px;font-size:23.40px;line-height:23.40px;color:#1b2838;">01/18/2025</div>
<div style="position:absolute;left:1913px;top:1022.8px;width:10.5px;height:10.5px;border-radius:50%;background:#dedede;"></div>
<div class="t" style="left:1937.60px;top:1018.00px;font-size:22.10px;line-height:22.10px;color:#6b7280;">14 days</div>
<div style="position:absolute;left:2131px;top:1009.8px;width:175px;height:37px;background:#428bf9;border-radius:6px;"></div>
<div class="t" style="left:2145.00px;top:1018.00px;font-size:21.80px;line-height:21.80px;color:#fff;-webkit-text-stroke:0.55px #fff;letter-spacing:0.787px;">Dependencies</div>
<div class="t" style="left:2355.58px;top:1017.00px;font-size:23.15px;line-height:23.15px;color:#1b2838;letter-spacing:0.209px;">jackson-databind-2.10.2.jar</div>
<div style="position:absolute;left:2758.7px;top:1015.80px;width:4.6px;height:4.6px;border-radius:50%;background:#1b2838;"></div>
<div style="position:absolute;left:2758.7px;top:1026.10px;width:4.6px;height:4.6px;border-radius:50%;background:#1b2838;"></div>
<div style="position:absolute;left:2758.7px;top:1036.40px;width:4.6px;height:4.6px;border-radius:50%;background:#1b2838;"></div>
<div style="position:absolute;left:418px;top:1062.5px;width:2376px;height:1.2px;background:#eceef3;"></div>
<div style="position:absolute;left:447px;top:1084.3999999999999px;width:25px;height:25px;box-sizing:border-box;border:2.6px solid #a3a3a3;border-radius:3px;"></div>
<div class="t" style="left:492.30px;top:1088.00px;font-size:21.85px;line-height:21.85px;color:#1b2838;">CVE-2022-1471</div>
<div class="t" style="left:849.00px;top:1087.00px;font-size:23.75px;line-height:23.75px;color:#1b2838;">2</div>
<div style="position:absolute;left:1072px;top:1079.1px;width:185px;height:38px;background:#ecedf0;border-radius:19px;"></div>
<div class="t" style="left:1085.60px;top:1090.00px;font-size:19.50px;line-height:19.50px;color:#1b2838;">Dependencies - ...</div>
<div style="position:absolute;left:1270px;top:1079.1px;width:175px;height:38px;overflow:hidden;"><div style="position:absolute;left:0;top:0;width:240px;height:38px;background:#ecedf0;border-radius:19px;"></div>
<div class="t" style="left:13.60px;top:11.00px;font-size:19.95px;line-height:19.95px;color:#1b2838;">Reachable and C...</div>
</div>
<div style="position:absolute;left:1474.4px;top:1078.8999999999999px;width:37.3px;height:37.3px;box-sizing:border-box;border:1.4px solid #e2e3e6;border-radius:6px;background:#fff;"></div>
<svg style="position:absolute;left:1485px;top:1088.3999999999999px;overflow:visible;top:1086.3999999999999px;" width="16" height="24.8" viewBox="0 0 16 24.8"><path d="M1.2 7.3 L8 3.0 L14.8 7.3 M1.2 12.0 L8 7.7 L14.8 12.0 M1.2 16.7 L8 12.4 L14.8 16.7 M1.2 21.400000000000002 L8 17.1 L14.8 21.400000000000002 " fill="none" stroke="#a5155c" stroke-width="2.4" stroke-linejoin="miter"/></svg>
<div class="t" style="left:1526.00px;top:1087.00px;font-size:22.90px;line-height:22.90px;color:#1b2838;">Critical</div>
<div style="position:absolute;left:1730.3px;top:1078.6999999999998px;width:37.7px;height:37.7px;box-sizing:border-box;border:1.4px solid #e2e3e6;border-radius:6px;background:#fff;"></div>
<svg style="position:absolute;left:1738px;top:1084.5px;overflow:visible;" width="23" height="26" viewBox="0 0 23 26"><path fill-rule="evenodd" fill="#f0984a" d="M2.8 3.1 H19.5 Q22.3 3.1 22.3 5.9 V23 Q22.3 25.8 19.5 25.8 H2.8 Q0 25.8 0 23 V5.9 Q0 3.1 2.8 3.1Z M2.3 9.9 V23.3 H20 V9.9Z"/><path d="M6.3 0.8 V4.5 M16.1 0.8 V4.5" stroke="#f0984a" stroke-width="2.1" stroke-linecap="round"/></svg>
<div class="t" style="left:1782.00px;top:1087.00px;font-size:23.40px;line-height:23.40px;color:#1b2838;">01/18/2025</div>
<div style="position:absolute;left:1913px;top:1093.1px;width:10.5px;height:10.5px;border-radius:50%;background:#dedede;"></div>
<div class="t" style="left:1937.60px;top:1088.00px;font-size:22.10px;line-height:22.10px;color:#6b7280;">14 days</div>
<div style="position:absolute;left:2131px;top:1080.1px;width:175px;height:37px;background:#428bf9;border-radius:6px;"></div>
<div class="t" style="left:2145.00px;top:1088.00px;font-size:21.80px;line-height:21.80px;color:#fff;-webkit-text-stroke:0.55px #fff;letter-spacing:0.787px;">Dependencies</div>
<div class="t" style="left:2356.00px;top:1087.00px;font-size:23.15px;line-height:23.15px;color:#1b2838;letter-spacing:0.036px;">snakeyaml-1.25.jar</div>
<div style="position:absolute;left:2758.7px;top:1086.10px;width:4.6px;height:4.6px;border-radius:50%;background:#1b2838;"></div>
<div style="position:absolute;left:2758.7px;top:1096.40px;width:4.6px;height:4.6px;border-radius:50%;background:#1b2838;"></div>
<div style="position:absolute;left:2758.7px;top:1106.70px;width:4.6px;height:4.6px;border-radius:50%;background:#1b2838;"></div>
<div style="position:absolute;left:2793px;top:590px;width:12px;height:560px;background:#dcdcdc;border-radius:6px 6px 0 0;"></div>
<svg style="position:absolute;left:2822.5px;top:490px;overflow:visible;" width="17" height="15" viewBox="0 0 17 15"><g fill="none" stroke="#1a1f26" stroke-width="1.8"><rect x="0.9" y="0.9" width="15.2" height="13.2"/><path d="M6 1 V14 M11 1 V14"/></g><rect x="0" y="0" width="17" height="2.8" fill="#1a1f26"/></svg>
<div style="position:absolute;left:2841.2px;top:517.5px;width:0;height:0;transform-origin:0 0;transform:rotate(90deg);">
<div class="t" style="left:-1px;top:0;font-size:21.5px;line-height:21.5px;color:#1a1f26;letter-spacing:0.1px;">Columns</div>
</div>
<svg style="position:absolute;left:0;top:0;overflow:visible;filter:drop-shadow(0.5px 4.5px 1.8px rgba(0,0,0,0.52));" width="2878" height="1138"><rect x="25.2" y="502.6" width="183.8" height="56.1" rx="9" fill="none" stroke="#04aca6" stroke-width="6.6"/></svg>
<svg style="position:absolute;left:0;top:0;overflow:visible;" width="2878" height="1138"><path d="M232 532.5 L300.7 497.7 V520.4 L456 519 V541.8 L300.7 543.4 V565.8Z" fill="#04aca6"/></svg>
<svg style="position:absolute;left:0;top:0;overflow:visible;filter:drop-shadow(0.5px 4.5px 1.8px rgba(0,0,0,0.52));" width="2878" height="1138"><rect x="1435" y="408" width="666" height="715.5" rx="30" fill="none" stroke="#04aca6" stroke-width="7"/></svg>
</div></body></html>
